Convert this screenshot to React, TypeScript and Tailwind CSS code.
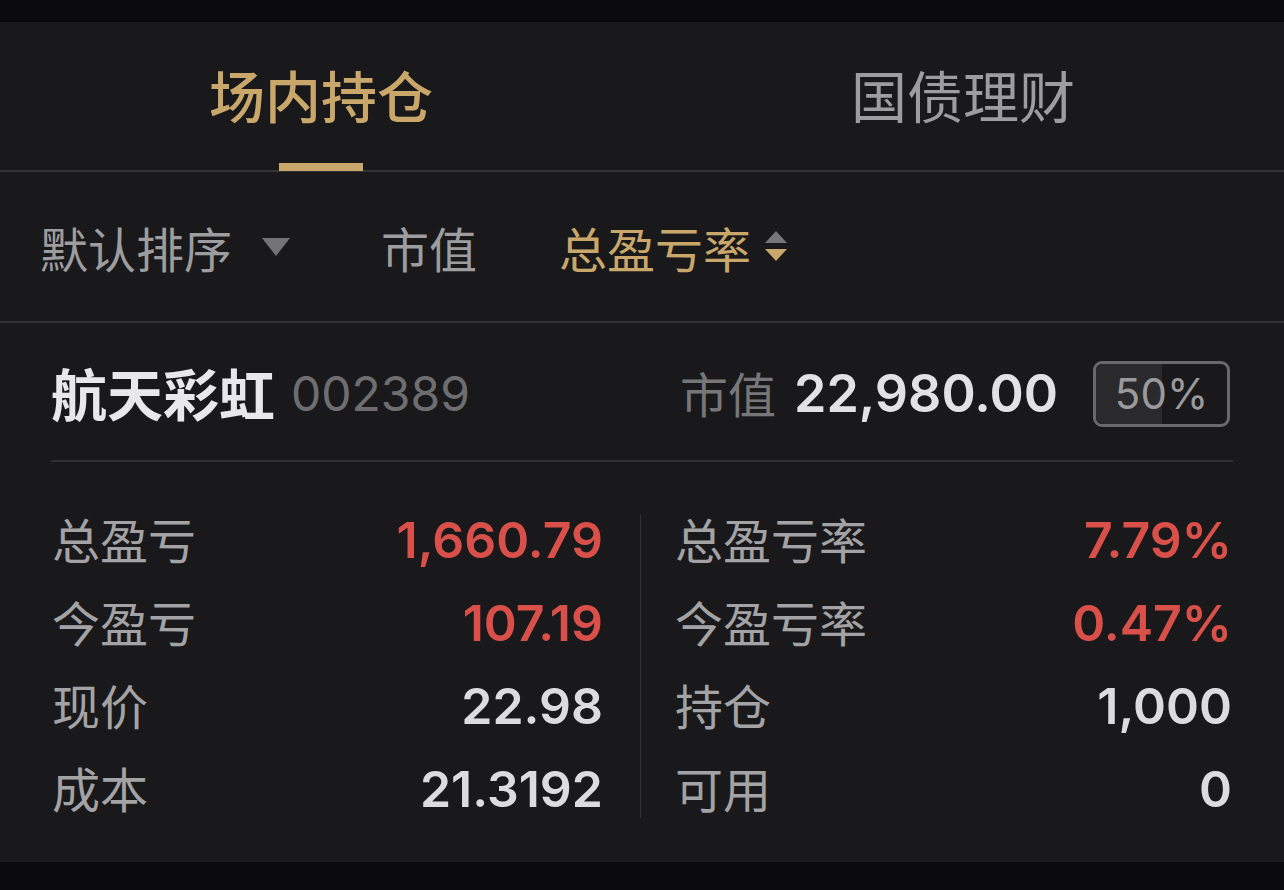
import React from 'react';

const cjk = '"Noto Sans CJK SC", "Noto Sans", sans-serif';
const num = 'Inter, Roboto, "Noto Sans CJK SC", sans-serif';

const leftRows = [
  { label: '总盈亏', value: '1,660.79', red: true },
  { label: '今盈亏', value: '107.19', red: true },
  { label: '现价', value: '22.98', red: false },
  { label: '成本', value: '21.3192', red: false },
];

const rightRows = [
  { label: '总盈亏率', value: '7.79%', red: true },
  { label: '今盈亏率', value: '0.47%', red: true },
  { label: '持仓', value: '1,000', red: false },
  { label: '可用', value: '0', red: false },
];

function StatColumn({ rows, className }: { rows: typeof leftRows; className: string }) {
  return (
    <div className={`flex flex-col ${className}`}>
      {rows.map((row, i) => (
        <div key={i} className="h-[83px] flex items-center justify-between">
          <span className="text-[48px] text-[#a3a3a5]" style={{ fontFamily: cjk }}>
            {row.label}
          </span>
          <span
            className={`text-[50px] leading-[60px] mt-[4px] font-semibold ${row.red ? 'text-[#d9504a]' : 'text-[#dcdcde]'}`}
            style={{ fontFamily: num }}
          >
            {row.value}
          </span>
        </div>
      ))}
    </div>
  );
}

export default function App() {
  return (
    <div className="w-[1284px] h-[890px] bg-[#0b0b0d] pt-[22px]" style={{ fontFamily: cjk }}>
      <div className="h-[840px] bg-[#19191b]">
        {/* tabs */}
        <div className="h-[150px] flex border-b-2 border-[#333335]">
          <div className="flex-1 relative flex justify-center">
            <span className="mt-[40px] text-[56px] leading-[64px] font-medium text-[#c9a76a]">场内持仓</span>
            <div className="absolute bottom-[-1px] left-1/2 -translate-x-1/2 w-[84px] h-[8px] bg-[#c9a76a]" />
          </div>
          <div className="flex-1 flex justify-center">
            <span className="mt-[40px] text-[56px] leading-[64px] text-[#9d9d9f]">国债理财</span>
          </div>
        </div>

        {/* sort bar */}
        <div className="h-[151px] flex items-center pl-[40px] border-b-2 border-[#333335]">
          <span className="text-[48px] text-[#9d9d9f]">默认排序</span>
          <svg className="ml-[30px]" width="28" height="20" viewBox="0 0 28 20">
            <path d="M0 1 H28 L14 19 Z" fill="#737375" />
          </svg>
          <span className="ml-[91px] text-[48px] text-[#9d9d9f]">市值</span>
          <span className="ml-[82px] text-[48px] text-[#c9a76a]">总盈亏率</span>
          <svg className="ml-[14px]" width="22" height="32" viewBox="0 0 22 32">
            <path d="M11 0 L22 12 H0 Z" fill="#767678" />
            <path d="M0 18 H22 L11 30 Z" fill="#c9a76a" />
          </svg>
        </div>

        {/* stock header */}
        <div className="h-[137px] flex items-center pl-[51px] pr-[54px]">
          <span className="text-[56px] font-bold text-[#e8e8ea]">航天彩虹</span>
          <span className="ml-[16px] mt-[4px] text-[48px] text-[#6e6e70]" style={{ fontFamily: num }}>002389</span>
          <div className="flex-1" />
          <span className="text-[48px] text-[#77777a]">市值</span>
          <span className="ml-[18px] mt-[4px] text-[52px] font-semibold text-[#e2e2e4]" style={{ fontFamily: num }}>
            22,980.00
          </span>
          <div className="ml-[35px] mt-[4px] relative w-[137px] h-[66px] rounded-[9px] border-[3px] border-[#69696b] overflow-hidden flex items-center justify-center">
            <div className="absolute left-0 top-0 bottom-0 w-1/2 bg-[#2a2a2c]" />
            <span className="relative text-[42px] text-[#9a9a9c]" style={{ fontFamily: num }}>50%</span>
          </div>
        </div>
        <div className="mx-[51px] h-[2px] bg-[#303032]" />

        {/* stats */}
        <div className="flex pl-[52px] pr-[52px] pt-[34px]">
          <StatColumn rows={leftRows} className="w-[551px]" />
          <div className="ml-[37px] mr-[34px] mt-[19px] w-[1px] h-[303px] bg-[#343436]" />
          <StatColumn rows={rightRows} className="flex-1" />
        </div>
      </div>
    </div>
  );
}
